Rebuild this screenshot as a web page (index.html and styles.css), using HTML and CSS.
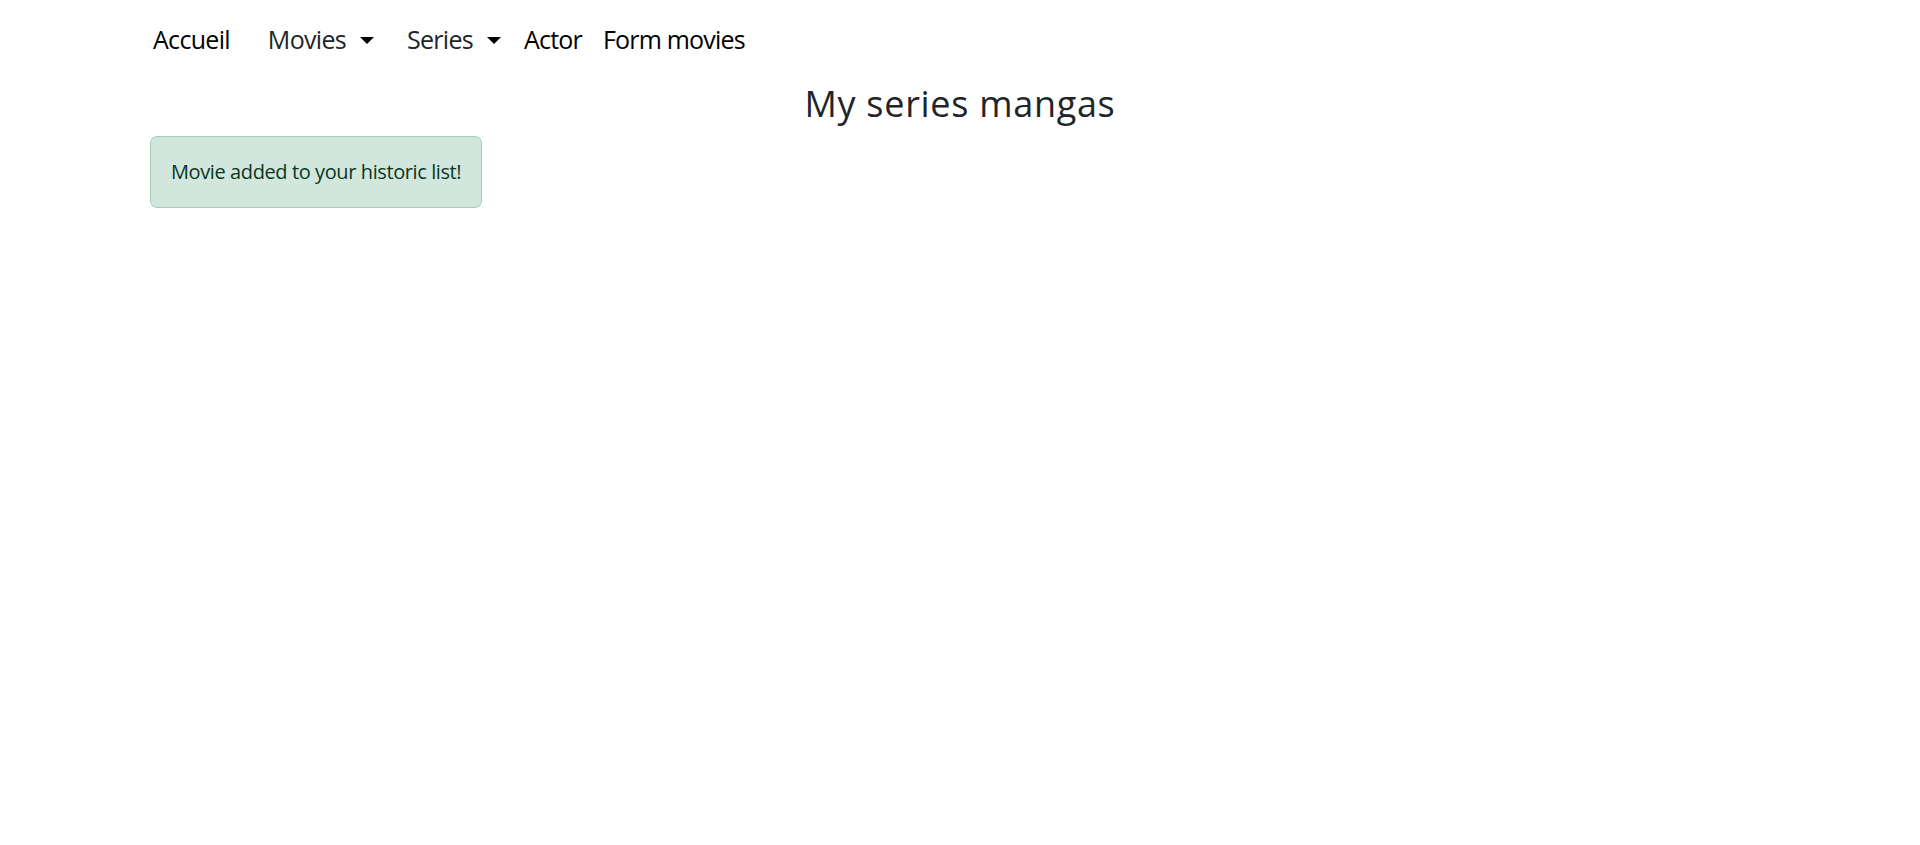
FILE: index.html
```html
<!DOCTYPE html>
<html lang="fr">
<head>
<meta charset="utf-8">
<title>My series mangas</title>
<link rel="stylesheet" href="styles.css">
</head>
<body>
<nav class="navbar">
  <div class="container nav-row">
    <a class="nav-brand" href="#">Accueil</a>
    <a class="nav-link dropdown-toggle first" href="#">Movies<span class="caret"></span></a>
    <a class="nav-link dropdown-toggle" href="#">Series<span class="caret"></span></a>
    <a class="nav-plain actor" href="#">Actor</a>
    <a class="nav-plain form" href="#">Form movies</a>
  </div>
</nav>
<main class="container">
  <h1 class="page-title">My series mangas</h1>
  <div class="alert-success">Movie added to your historic list!</div>
</main>
</body>
</html>
```

FILE: styles.css
```css
html, body {
  margin: 0;
  padding: 0;
  background: #ffffff;
}
body {
  font-family: "Open Sans", "Noto Sans", sans-serif;
  color: #212529;
}
.container {
  max-width: 1650px;
  margin: 0 auto;
  padding: 0 15px;
  box-sizing: border-box;
}
.navbar {
  padding-top: 21px;
  padding-bottom: 6px;
}
.nav-row {
  display: flex;
  align-items: center;
  font-size: 25px;
  line-height: 37px;
  letter-spacing: -0.7px;
}
.nav-row a {
  text-decoration: none;
}
.nav-brand {
  color: #000000;
  padding-left: 3px;
}
.nav-link {
  color: #212529;
  display: flex;
  align-items: center;
}
.nav-link.first {
  margin-left: 38px;
}
.nav-link + .nav-link {
  margin-left: 33px;
}
.caret {
  display: inline-block;
  margin-left: 14px;
  width: 0;
  height: 0;
  border-left: 7px solid transparent;
  border-right: 7px solid transparent;
  border-top: 7px solid #000000;
  margin-top: 2px;
}
.nav-plain {
  color: #000000;
  letter-spacing: -0.8px;
}
.nav-plain.actor {
  margin-left: 23px;
}
.nav-plain.form {
  margin-left: 21px;
}
.page-title {
  margin: 18px 0 0;
  text-align: center;
  font-size: 36px;
  font-weight: 400;
  line-height: 43px;
  letter-spacing: 0.7px;
  color: #212529;
}
.alert-success {
  display: inline-block;
  margin-top: 11px;
  padding: 20px 20px;
  font-size: 20px;
  line-height: 30px;
  letter-spacing: -0.4px;
  color: #0a3622;
  background: #d1e7dd;
  border: 1px solid #a3cfbb;
  border-radius: 7px;
}
```
